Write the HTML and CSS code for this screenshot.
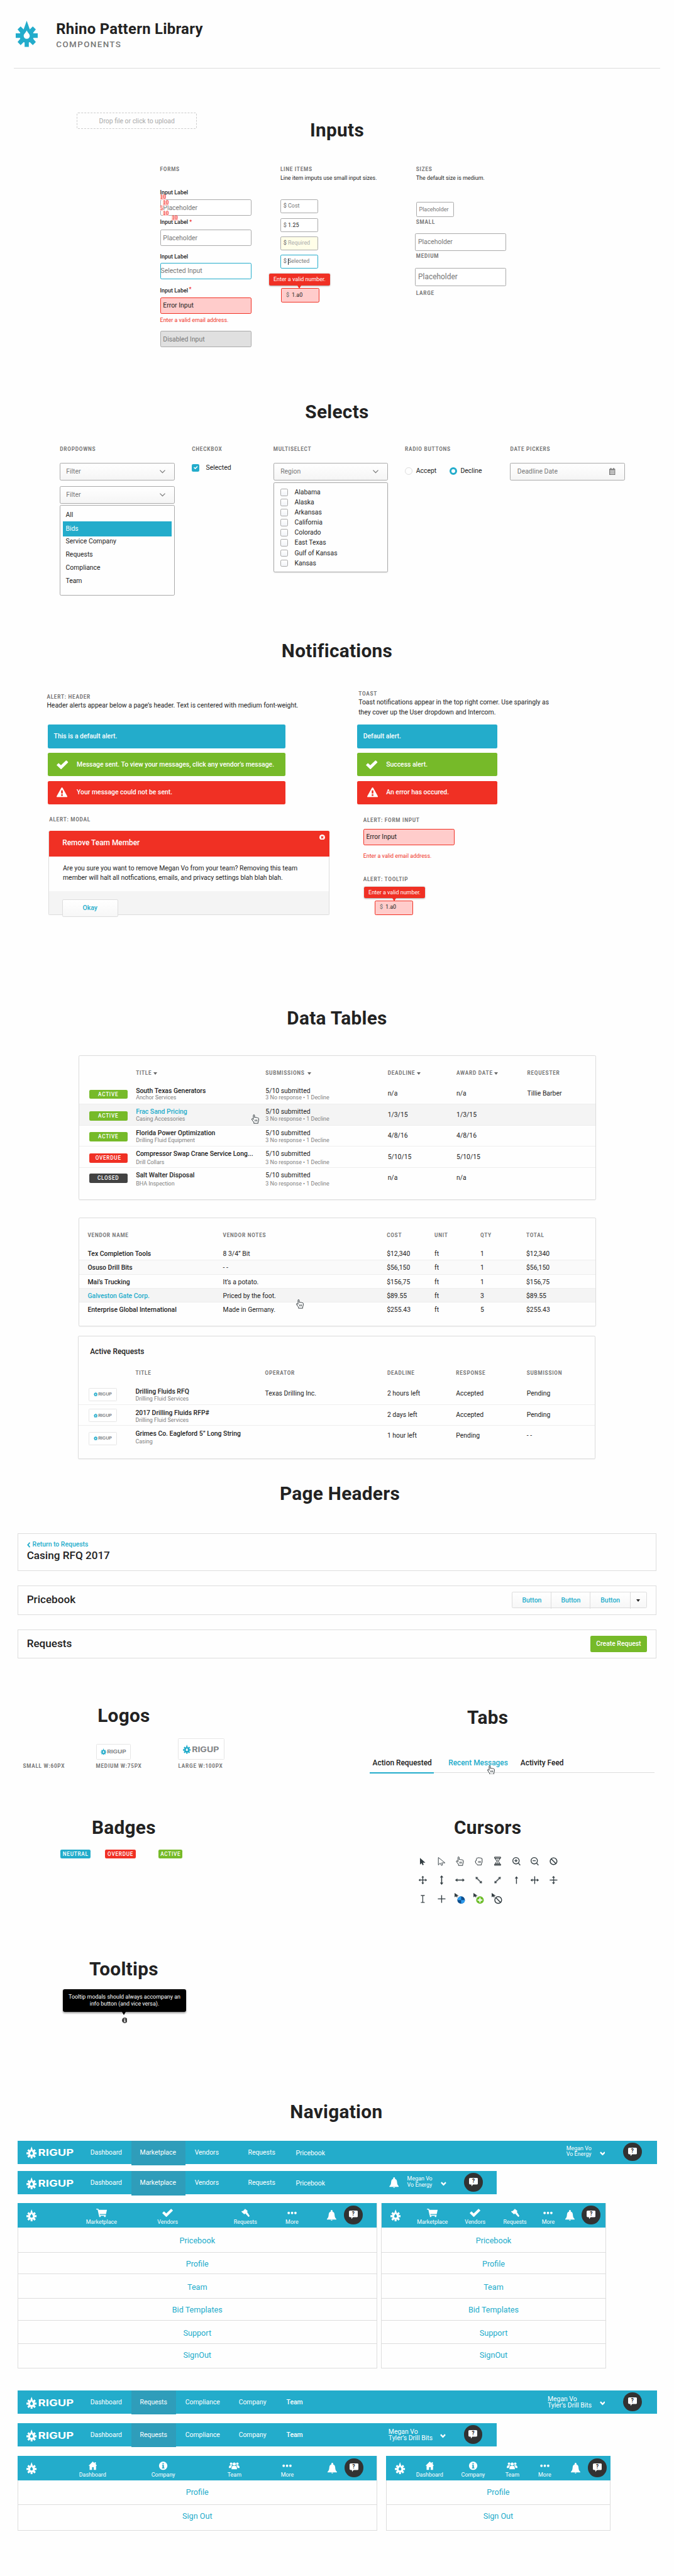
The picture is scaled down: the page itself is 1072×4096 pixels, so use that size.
FILE: index.html
```html
<!DOCTYPE html>
<html lang="en">
<head>
<meta charset="utf-8">
<title>Rhino Pattern Library</title>
<link rel="stylesheet" href="styles.css">
</head>
<body>
<svg class="sprite" aria-hidden="true">
  <symbol id="mark" viewBox="0 0 47 56">
    <g fill="currentColor">
      <path d="M23.5 0 32 24H15z"/>
      <circle cx="23.5" cy="32" r="15"/>
      <path d="M0 27h47v9.5H0zM19 40h9v16h-9z"/>
      <path d="M10.5 12 4 18.500l9 11 8-7zM36.500 12 43 18.500l-9 11-8-7zM10.500 52 4 45.500l9-11 8 7zM36.500 52 43 45.500l-9-11-8 7z"/>
    </g>
    <path class="hole" d="M23.500 20.500C25 25 30 28 30 32.200a6.500 6.500 0 0 1-13 0C17 28 22 25 23.500 20.500z"/>
  </symbol>
  <symbol id="check" viewBox="0 0 24 18"><path fill="currentColor" d="M0 9.500 3.500 6Q4 5.600 4.600 6L9 10 19.300.3q.6-.5 1.200 0L24 3.600 10 17.600q-.8.700-1.600 0z"/></symbol>
  <symbol id="warn" viewBox="0 0 22 20"><path fill="currentColor" fill-rule="evenodd" d="M9.600.8q1.400-1.600 2.800 0L21.800 18q.6 2-1.300 2H1.500q-1.900 0-1.300-2zM9.300 6v6.500h3.400V6zm0 8.200v3.200h3.400v-3.200z"/></symbol>
  <symbol id="down" viewBox="0 0 12 9"><path fill="none" stroke="currentColor" stroke-width="3" d="M1.200 1.500 6 6.500l4.800-5"/></symbol>
  <symbol id="thin" viewBox="0 0 12 8"><path fill="none" stroke="currentColor" stroke-width="1.600" d="M.6.800 6 6.400 11.400.8"/></symbol>
  <symbol id="bell" viewBox="0 0 20 23"><path fill="currentColor" d="M8.300 1.500h3.400v2C15 4.500 16 7 16.300 10c.3 4 .7 6.500 3.700 9v1.500H0V19c3-2.500 3.400-5 3.700-9C4 7 5 4.500 8.300 3.500zM8 21.200h4c-.3 2-3.700 2-4 0z"/><circle cx="10" cy="1.800" r="1.800" fill="currentColor"/></symbol>
  <symbol id="cart" viewBox="0 0 23 18"><path fill="currentColor" d="M0 0h4.500l.8 2.500H23L21 11.500H7.200l.5 1.700h13V15H6L3 1.800H0z"/><circle cx="8" cy="16.400" r="1.600" fill="currentColor"/><circle cx="18.500" cy="16.400" r="1.600" fill="currentColor"/></symbol>
  <symbol id="gavel" viewBox="0 0 18 18"><path fill="currentColor" d="m8.200.2 5.500 5-1.500 1.400 5.600 8.800-2.200 2.400L8.400 10l-2 2L0 6.300 1.700 4.700 3 5.300 7 1.500z"/></symbol>
  <symbol id="dots" viewBox="0 0 20 18"><g fill="currentColor"><circle cx="2.800" cy="9" r="2.600"/><circle cx="10" cy="9" r="2.600"/><circle cx="17.200" cy="9" r="2.600"/></g></symbol>
  <symbol id="home" viewBox="0 0 18 18"><path fill="currentColor" d="M9 0l4 3.800V1.500h2.500v4.700L18 9h-2v9h-5v-6H7.500v6H2.200V9H0z"/></symbol>
  <symbol id="info" viewBox="0 0 18 18"><circle cx="9" cy="9" r="9" fill="currentColor"/><path class="hole" d="M7.400 3.200h3v2.500h-3zM6.500 7h4v6h1.200v1.800H6.300V13h1.200V8.700h-1z"/></symbol>
  <symbol id="team" viewBox="0 0 26 18"><g fill="currentColor"><circle cx="5.500" cy="4" r="3"/><circle cx="20.500" cy="4" r="3"/><circle cx="13" cy="4.800" r="3.800"/><path d="M0 14.500q0-6.500 4-6.500h4.500Q5 10.500 5 14.500zM26 14.500q0-6.500-4-6.500h-4.500Q21 10.500 21 14.500zM6.300 17.500q0-8 4-8h5.400q4 0 4 8z"/></g></symbol>
  <symbol id="chat" viewBox="0 0 19 18"><path fill="#fff" d="M2.500 0h14Q19 0 19 2.500v9q0 2.500-2.500 2.500H8.500L5.500 18l-.5-4H2.500Q0 14 0 11.500v-9Q0 0 2.500 0z"/></symbol>
  <symbol id="cal" viewBox="0 0 13 15"><path fill="currentColor" d="M0 2h2.500V0h2v2h4V0h2v2H13v13H0z"/><path stroke="#fff" stroke-width=".9" d="M1 5.500h11M1 8.500h11M1 11.500h11M3.800 5v9M6.500 5v9M9.200 5v9"/></symbol>
  <symbol id="close" viewBox="0 0 12 12"><circle cx="6" cy="6" r="6" fill="#fff"/><path stroke="#f03024" stroke-width="2" d="m3.800 3.800 4.400 4.400m0-4.400L3.800 8.200"/></symbol>
  <symbol id="hand" viewBox="0 0 16 20"><path fill="#fff" stroke="#222b2f" stroke-width="1.200" stroke-linejoin="round" d="M5 19v-2.500L1 11.500q-1.300-2.500.8-2.500L4 11V2q0-1.300 1.200-1.300T6.500 2v4.500q2-.8 3 .3 2-.6 3 .6 2.500-.4 2.800 1.300V13L14 16.500V19z"/><path stroke="#222b2f" d="M7.500 11v4M9.700 11v4M11.900 11v4"/></symbol>
  <symbol id="grab" viewBox="0 0 16 20"><path fill="#fff" stroke="#222b2f" stroke-width="1.200" stroke-linejoin="round" d="M5 18v-1L1.500 14 .8 9.500 3 8.500V4.500Q4 2.500 6 3.300 7.500 1.500 9.500 3q2-.8 3 .6 2.600-.4 2.700 1.600v7L13.500 16v2z"/><path stroke="#222b2f" d="M7.500 9.500v4M9.700 9.500v4M11.900 9.500v4"/></symbol>
  <symbol id="arrow" viewBox="0 0 20 20"><path fill="#333e43" d="M4 3v14l3.500-3 2 4.500 2.500-1-2-4.500h5.500z"/></symbol>
  <symbol id="arrow-o" viewBox="0 0 20 20"><path fill="#fff" stroke="#333e43" stroke-width="1.200" d="M3 2v16l4-4 2.500 5L12 18l-2-4.500h7z"/></symbol>
  <symbol id="glass" viewBox="0 0 20 20"><path fill="#fff" stroke="#222b2f" stroke-width="1.300" d="M3.500 1.200h13v2.300h-13zM3.500 16.500h13v2.300h-13zM5 3.500q0 4 4 6.500-4 2.500-4 6.500h10q0-4-4-6.500 4-2.500 4-6.500z"/><path stroke="#222b2f" stroke-width="1.600" stroke-dasharray="1 1" d="M7.500 7h5M9 9h2M9.500 12h1M7.500 14h5M6.500 15.800h7"/></symbol>
  <symbol id="zoom-in" viewBox="0 0 20 20"><g fill="none" stroke="#333e43" stroke-width="1.700"><circle cx="9" cy="9" r="6.800"/><path d="m14 14 4 4.500M5.800 9h6.400M9 5.800v6.400"/></g></symbol>
  <symbol id="zoom-out" viewBox="0 0 20 20"><g fill="none" stroke="#333e43" stroke-width="1.700"><circle cx="9" cy="9" r="6.800"/><path d="m14 14 4 4.500M5.800 9h6.400"/></g></symbol>
  <symbol id="no" viewBox="0 0 20 20"><g fill="none" stroke="#333e43" stroke-width="1.900"><circle cx="10" cy="10" r="7.200"/><path d="m5 5 10 10"/></g></symbol>
  <symbol id="ns" viewBox="0 0 20 20"><path stroke="#333e43" stroke-width="2" d="M10 3v14"/><path fill="#333e43" d="m10 0 3.500 4.500h-7zM10 20l3.500-4.500h-7z"/></symbol>
  <symbol id="move" viewBox="0 0 20 20"><path stroke="#333e43" stroke-width="1.800" d="M10 3v14M3 10h14"/><path fill="#333e43" d="m10 1 2.800 3.500H7.200zM10 19l2.800-3.500H7.200zM1 10l3.500-2.800v5.600zM19 10l-3.500-2.800v5.600z"/></symbol>
  <symbol id="up" viewBox="0 0 20 20"><path stroke="#333e43" stroke-width="1.800" d="M10 4v14"/><path fill="#333e43" d="m10 2 3.500 4.500h-7z"/></symbol>
  <symbol id="col" viewBox="0 0 20 20"><path stroke="#333e43" stroke-width="1.800" d="M10 2v16M3 10h14"/><path fill="#333e43" d="M1 10l4-3v6zM19 10l-4-3v6z"/></symbol>
  <symbol id="beam" viewBox="0 0 20 20"><path fill="none" stroke="#333e43" stroke-width="1.600" d="M6 2.500h3l1 1 1-1h3M6 17.500h3l1-1 1 1h3M10 3.500v13"/></symbol>
  <symbol id="plus" viewBox="0 0 20 20"><path stroke="#333e43" stroke-width="1.800" d="M10 2v16M2 10h16"/></symbol>
  <symbol id="tip" viewBox="0 0 12 10"><path fill="#333e43" d="M0 0v9l3-2 2 2.500 1.500-1L5 6h4z"/></symbol>
</svg>

<main class="page">
  <header class="masthead">
    <svg class="masthead-mark"><use href="#mark"/></svg>
    <div>
      <h1>Rhino Pattern Library</h1>
      <p class="masthead-sub">COMPONENTS</p>
    </div>
  </header>

  <section class="inputs">
    <div class="inputs-top">
      <div class="dropzone">Drop file or click to upload</div>
      <h2>Inputs</h2>
    </div>
    <div class="inputs-cols">
      <div class="col forms">
        <div class="cap">FORMS</div>
        <div class="label mt34">Input Label</div>
        <div class="input mt5">Placeholder</div>
        <div class="label mt7">Input Label <b class="req">*</b></div>
        <div class="input mt6">Placeholder</div>
        <div class="label mt17">Input Label</div>
        <div class="input selected flush mt3">Selected Input</div>
        <div class="label mt18">Input Label<b class="req sup">*</b></div>
        <div class="input error mt6">Error Input</div>
        <div class="error-text mt6">Enter a valid email address.</div>
        <div class="input disabled mt14">Disabled Input</div>
        <span class="spec s1">10</span><span class="spec s2">10</span><span class="spec s3">5</span><span class="spec s4">10</span><span class="spec s5">10</span>
      </div>
      <div class="col lines">
        <div class="cap">LINE ITEMS</div>
        <div class="note mt3">Line item imputs use small input sizes.</div>
        <div class="input money mt36"><b>$</b>Cost</div>
        <div class="input money dark low mt10"><b>$</b>1.25</div>
        <div class="input money required mt9"><b>$</b>Required</div>
        <div class="input money selected mt9"><b>$</b><i class="caret"></i>Selected</div>
        <div class="bubble mt11">Enter a valid number.</div>
        <div class="input money error wide mt6"><b>$</b>1.a0</div>
      </div>
      <div class="col">
        <div class="cap">SIZES</div>
        <div class="note mt3">The default size is medium.</div>
        <div class="input small mt41">Placeholder</div>
        <div class="cap mt4">SMALL</div>
        <div class="input medium mt16">Placeholder</div>
        <div class="cap mt4">MEDIUM</div>
        <div class="input large mt16">Placeholder</div>
        <div class="cap mt7">LARGE</div>
      </div>
    </div>
  </section>

  <section class="selects">
    <h2>Selects</h2>
    <div class="selects-cols">
      <div>
        <div class="cap">DROPDOWNS</div>
        <div class="select">Filter<svg><use href="#thin"/></svg></div>
        <div class="select second">Filter<svg><use href="#thin"/></svg></div>
        <ul class="menu"><li>All</li><li class="on">Bids</li><li>Service Company</li><li>Requests</li><li>Compliance</li><li>Team</li></ul>
      </div>
      <div>
        <div class="cap">CHECKBOX</div>
        <div class="checked"><span class="box on"><svg><use href="#check"/></svg></span>Selected</div>
      </div>
      <div>
        <div class="cap">MULTISELECT</div>
        <div class="select pad">Region<svg><use href="#thin"/></svg></div>
        <ul class="multi">
          <li><span class="box"></span>Alabama</li><li><span class="box"></span>Alaska</li><li><span class="box"></span>Arkansas</li><li><span class="box"></span>California</li><li><span class="box"></span>Colorado</li><li><span class="box"></span>East Texas</li><li><span class="box"></span>Gulf of Kansas</li><li><span class="box"></span>Kansas</li>
        </ul>
      </div>
      <div>
        <div class="cap">RADIO BUTTONS</div>
        <div class="radios"><span class="radio"></span><span class="opt">Accept</span><span class="radio on"></span><span>Decline</span></div>
      </div>
      <div>
        <div class="cap">DATE PICKERS</div>
        <div class="select pad date">Deadline Date<svg class="cal"><use href="#cal"/></svg></div>
      </div>
    </div>
  </section>

  <section class="notes">
    <h2>Notifications</h2>
    <div class="notes-cols">
      <div class="notes-left">
        <div class="intro">
          <div class="cap">ALERT: HEADER</div>
          <p>Header alerts appear below a page’s header. Text is centered with medium font-weight.</p>
        </div>
        <div class="alert">This is a default alert.</div>
        <div class="alert good"><svg><use href="#check"/></svg>Message sent. To view your messages, click any vendor’s message.</div>
        <div class="alert bad"><svg><use href="#warn"/></svg>Your message could not be sent.</div>
        <div class="cap modal-cap">ALERT: MODAL</div>
        <div class="modal">
          <div class="modal-head">Remove Team Member<svg><use href="#close"/></svg></div>
          <div class="modal-body">Are you sure you want to remove Megan Vo from your team? Removing this team<br>member will halt all notfications, emails, and privacy settings blah blah blah.</div>
          <div class="modal-foot"><span class="btn">Okay</span></div>
        </div>
      </div>
      <div class="notes-right">
        <div class="intro">
          <div class="cap">TOAST</div>
          <p>Toast notifications appear in the top right corner. Use sparingly as<br>they cover up the User dropdown and Intercom.</p>
        </div>
        <div class="alert">Default alert.</div>
        <div class="alert good"><svg><use href="#check"/></svg>Success alert.</div>
        <div class="alert bad"><svg><use href="#warn"/></svg>An error has occured.</div>
        <div class="samples">
          <div class="cap">ALERT: FORM INPUT</div>
          <div class="input error mt9">Error Input</div>
          <div class="error-text mt16">Enter a valid email address.</div>
          <div class="cap mt35">ALERT: TOOLTIP</div>
          <div class="bubble mt6">Enter a valid number.</div>
          <div class="input money error wide mt5"><b>$</b>1.a0</div>
        </div>
      </div>
    </div>
  </section>

  <section class="tables">
    <h2>Data Tables</h2>
    <div class="card t1">
      <div class="row head"><span></span><span class="sort">TITLE</span><span class="sort far">SUBMISSIONS</span><span class="sort">DEADLINE</span><span class="sort">AWARD DATE</span><span>REQUESTER</span></div>
      <div class="row d0"><span class="badge">ACTIVE</span><div><b>South Texas Generators</b><small>Anchor Services</small></div><div>5/10 submitted<small>3 No response • 1 Decline</small></div><span>n/a</span><span>n/a</span><span>Tillie Barber</span></div>
      <div class="row d1 hover"><span class="badge">ACTIVE</span><div><b>Frac Sand Pricing</b><small>Casing Accessories</small></div><div>5/10 submitted<small>3 No response • 1 Decline</small></div><span>1/3/15</span><span>1/3/15</span><span></span></div>
      <div class="row d2"><span class="badge">ACTIVE</span><div><b>Florida Power Optimization</b><small>Drilling Fluid Equipment</small></div><div>5/10 submitted<small>3 No response • 1 Decline</small></div><span>4/8/16</span><span>4/8/16</span><span></span></div>
      <div class="row d3"><span class="badge red">OVERDUE</span><div><b>Compressor Swap Crane Service Long...</b><small>Drill Collars</small></div><div>5/10 submitted<small>3 No response • 1 Decline</small></div><span>5/10/15</span><span>5/10/15</span><span></span></div>
      <div class="row d4 last"><span class="badge dark">CLOSED</span><div><b>Salt Walter Disposal</b><small>BHA Inspection</small></div><div>5/10 submitted<small>3 No response • 1 Decline</small></div><span>n/a</span><span>n/a</span><span></span></div>
      <svg class="pointer p1"><use href="#hand"/></svg>
    </div>
    <div class="card t2">
      <div class="row head"><span>VENDOR NAME</span><span>VENDOR NOTES</span><span>COST</span><span>UNIT</span><span>QTY</span><span>TOTAL</span></div>
      <div class="row"><b>Tex Completion Tools</b><span>8 3/4” Bit</span><span>$12,340</span><span>ft</span><span>1</span><span>$12,340</span></div>
      <div class="row alt"><b>Osuso Drill Bits</b><span>- -</span><span>$56,150</span><span>ft</span><span>1</span><span>$56,150</span></div>
      <div class="row"><b>Mai’s Trucking</b><span>It’s a potato.</span><span>$156,75</span><span>ft</span><span>1</span><span>$156,75</span></div>
      <div class="row hover"><b>Galveston Gate Corp.</b><span>Priced by the foot.</span><span>$89.55</span><span>ft</span><span>3</span><span>$89.55</span></div>
      <div class="row last"><b>Enterprise Global International</b><span>Made in Germany.</span><span>$255.43</span><span>ft</span><span>5</span><span>$255.43</span></div>
      <svg class="pointer p2"><use href="#hand"/></svg>
    </div>
    <div class="card t3">
      <div class="card-title">Active Requests</div>
      <div class="row head"><span></span><span>TITLE</span><span>OPERATOR</span><span>DEADLINE</span><span>RESPONSE</span><span>SUBMISSION</span></div>
      <div class="row"><span class="logo-box sm"><svg viewBox="0 0 101 26"><use href="#mark" width="22" height="26"/><text class="word" x="25" y="20.800" textLength="76" lengthAdjust="spacingAndGlyphs">RIGUP</text></svg></span><div><b>Drilling Fluids RFQ</b><small>Drilling Fluid Services</small></div><span>Texas Drilling Inc.</span><span>2 hours left</span><span>Accepted</span><span>Pending</span></div>
      <div class="row d1"><span class="logo-box sm"><svg viewBox="0 0 101 26"><use href="#mark" width="22" height="26"/><text class="word" x="25" y="20.800" textLength="76" lengthAdjust="spacingAndGlyphs">RIGUP</text></svg></span><div><b>2017 Drilling Fluids RFP#</b><small>Drilling Fluid Services</small></div><span></span><span>2 days left</span><span>Accepted</span><span>Pending</span></div>
      <div class="row d2 last"><span class="logo-box sm low"><svg viewBox="0 0 101 26"><use href="#mark" width="22" height="26"/><text class="word" x="25" y="20.800" textLength="76" lengthAdjust="spacingAndGlyphs">RIGUP</text></svg></span><div><b>Grimes Co. Eagleford 5” Long String</b><small>Casing</small></div><span></span><span>1 hour left</span><span>Pending</span><span>- -</span></div>
    </div>
  </section>

  <section class="headers">
    <h2>Page Headers</h2>
    <div class="page-header tall"><div><a class="back"><svg viewBox="0 0 7 12"><path fill="none" stroke="currentColor" stroke-width="2.500" d="M6 1 1.800 6 6 11"/></svg>Return to Requests</a><h3>Casing RFQ 2017</h3></div></div>
    <div class="page-header"><h3>Pricebook</h3><div class="btn-group"><span>Button</span><span>Button</span><span>Button</span><span class="more"></span></div></div>
    <div class="page-header"><h3>Requests</h3><span class="create">Create Request</span></div>
  </section>

  <section class="duo">
    <div class="duo-left">
      <h2>Logos</h2>
      <div class="logos">
        <div><div class="cap">SMALL W:60PX</div></div>
        <div><span class="logo-box md"><svg viewBox="0 0 101 26"><use href="#mark" width="22" height="26"/><text class="word" x="25" y="20.800" textLength="76" lengthAdjust="spacingAndGlyphs">RIGUP</text></svg></span><div class="cap">MEDIUM W:75PX</div></div>
        <div><span class="logo-box lg"><svg viewBox="0 0 101 26"><use href="#mark" width="22" height="26"/><text class="word" x="25" y="20.800" textLength="76" lengthAdjust="spacingAndGlyphs">RIGUP</text></svg></span><div class="cap">LARGE W:100PX</div></div>
      </div>
      <h2 class="badges-title">Badges</h2>
      <div class="badges"><span class="badge blue">NEUTRAL</span><span class="badge red">OVERDUE</span><span class="badge">ACTIVE</span></div>
      <h2 class="tooltips-title">Tooltips</h2>
      <div class="tooltip">Tooltip modals should always accompany an<br>info button (and vice versa).</div>
      <svg class="tooltip-info"><use href="#info"/></svg>
    </div>
    <div class="duo-right">
      <h2>Tabs</h2>
      <div class="tabs"><span class="tab on">Action Requested</span><span class="tab link">Recent Messages<svg class="pointer p3"><use href="#hand"/></svg></span><span class="tab">Activity Feed</span></div>
      <h2 class="cursors-title">Cursors</h2>
      <div class="cursors">
        <svg><use href="#arrow"/></svg><svg><use href="#arrow-o"/></svg><svg><use href="#hand"/></svg><svg><use href="#grab"/></svg><svg><use href="#glass"/></svg><svg><use href="#zoom-in"/></svg><svg><use href="#zoom-out"/></svg><svg><use href="#no"/></svg>
        <svg><use href="#move"/></svg><svg><use href="#ns"/></svg><svg class="turn90"><use href="#ns"/></svg><svg class="turn315"><use href="#ns"/></svg><svg class="turn45"><use href="#ns"/></svg><svg><use href="#up"/></svg><svg><use href="#col"/></svg><svg class="turn90"><use href="#col"/></svg>
        <svg><use href="#beam"/></svg><svg><use href="#plus"/></svg>
        <svg class="combo" viewBox="0 0 24 26"><use href="#tip" width="12" height="10"/><circle cx="14" cy="15" r="8" fill="#0d4f8f"/><path fill="#2f9df0" d="M14 15V7a8 8 0 0 0-8 8zM14 15v8a8 8 0 0 0 8-8z"/></svg>
        <svg class="combo" viewBox="0 0 24 26"><use href="#tip" width="12" height="10"/><circle cx="14" cy="15" r="8" fill="#6cbf28"/><path stroke="#fff" stroke-width="2.600" d="M14 10v10M9 15h10"/></svg>
        <svg class="combo" viewBox="0 0 24 26"><use href="#tip" width="12" height="10"/><g fill="none" stroke="#333e43" stroke-width="1.900"><circle cx="14" cy="15" r="7.200"/><path d="m9 10 10 10"/></g></svg>
      </div>
    </div>
  </section>

  <section class="nav">
    <h2>Navigation</h2>
    <div class="bar b1"><svg class="brand" viewBox="0 0 101 26"><use href="#mark" width="22" height="26"/><text class="word" x="25" y="20.800" textLength="76" lengthAdjust="spacingAndGlyphs">RIGUP</text></svg><span>Dashboard</span><span class="on">Marketplace</span><span class="in">Vendors</span><span>Requests</span><span class="low">Pricebook</span><div class="user">Megan Vo<br>Vo Energy</div><svg class="down"><use href="#down"/></svg><span class="chat"><svg><use href="#chat"/></svg><i>?</i></span></div>
    <div class="bar b2"><svg class="brand" viewBox="0 0 101 26"><use href="#mark" width="22" height="26"/><text class="word" x="25" y="20.800" textLength="76" lengthAdjust="spacingAndGlyphs">RIGUP</text></svg><span>Dashboard</span><span class="on">Marketplace</span><span class="in">Vendors</span><span>Requests</span><span class="low">Pricebook</span><svg class="bell"><use href="#bell"/></svg><div class="user">Megan Vo<br>Vo Energy</div><svg class="down"><use href="#down"/></svg><span class="chat"><svg><use href="#chat"/></svg><i>?</i></span></div>
    <div class="drawers">
      <div class="drawer six">
        <div class="icons i1"><svg class="mark"><use href="#mark"/></svg><span><svg><use href="#cart"/></svg>Marketplace</span><span><svg><use href="#check"/></svg>Vendors</span><span><svg><use href="#gavel"/></svg>Requests</span><span><svg><use href="#dots"/></svg>More</span><svg class="bell"><use href="#bell"/></svg><span class="chat"><svg><use href="#chat"/></svg><i>?</i></span></div>
        <a>Pricebook</a><a>Profile</a><a>Team</a><a>Bid Templates</a><a>Support</a><a>SignOut</a>
      </div>
      <div class="drawer six narrow">
        <div class="icons i2"><svg class="mark"><use href="#mark"/></svg><span><svg><use href="#cart"/></svg>Marketplace</span><span><svg><use href="#check"/></svg>Vendors</span><span><svg><use href="#gavel"/></svg>Requests</span><span><svg><use href="#dots"/></svg>More</span><svg class="bell"><use href="#bell"/></svg><span class="chat"><svg><use href="#chat"/></svg><i>?</i></span></div>
        <a>Pricebook</a><a>Profile</a><a>Team</a><a>Bid Templates</a><a>Support</a><a>SignOut</a>
      </div>
    </div>
    <div class="bar b3"><svg class="brand" viewBox="0 0 101 26"><use href="#mark" width="22" height="26"/><text class="word" x="25" y="20.800" textLength="76" lengthAdjust="spacingAndGlyphs">RIGUP</text></svg><span>Dashboard</span><span class="on">Requests</span><span class="in">Compliance</span><span>Company</span><span class="strong">Team</span><div class="user">Megan Vo<br>Tyler’s Drill Bits</div><svg class="down"><use href="#down"/></svg><span class="chat"><svg><use href="#chat"/></svg><i>?</i></span></div>
    <div class="bar b4"><svg class="brand" viewBox="0 0 101 26"><use href="#mark" width="22" height="26"/><text class="word" x="25" y="20.800" textLength="76" lengthAdjust="spacingAndGlyphs">RIGUP</text></svg><span>Dashboard</span><span class="on">Requests</span><span class="in">Compliance</span><span>Company</span><span class="strong">Team</span><div class="user">Megan Vo<br>Tyler’s Drill Bits</div><svg class="down"><use href="#down"/></svg><span class="chat"><svg><use href="#chat"/></svg><i>?</i></span></div>
    <div class="drawers second">
      <div class="drawer two">
        <div class="icons i3"><svg class="mark"><use href="#mark"/></svg><span><svg><use href="#home"/></svg>Dashboard</span><span><svg><use href="#info"/></svg>Company</span><span><svg><use href="#team"/></svg>Team</span><span><svg><use href="#dots"/></svg>More</span><svg class="bell"><use href="#bell"/></svg><span class="chat"><svg><use href="#chat"/></svg><i>?</i></span></div>
        <a>Profile</a><a>Sign Out</a>
      </div>
      <div class="drawer two narrow">
        <div class="icons i4"><svg class="mark"><use href="#mark"/></svg><span><svg><use href="#home"/></svg>Dashboard</span><span><svg><use href="#info"/></svg>Company</span><span><svg><use href="#team"/></svg>Team</span><span><svg><use href="#dots"/></svg>More</span><svg class="bell"><use href="#bell"/></svg><span class="chat"><svg><use href="#chat"/></svg><i>?</i></span></div>
        <a>Profile</a><a>Sign Out</a>
      </div>
    </div>
  </section>
</main>
</body>
</html>
```
FILE: styles.css
```css
:root {
  --blue: #23accb;
  --green: #76ba29;
  --red: #f03024;
  --ink: #222;
  --gray: #777;
  --line: #ddd;
  --hole: #fff;
}
* { box-sizing: border-box; }
body { margin: 0; background: #fefefe; }
.sprite { position: absolute; width: 0; height: 0; }
.hole { fill: var(--hole); }
.word { font: 700 19.500px Inter, sans-serif; fill: var(--word, #828487); }

.page {
  zoom: 0.744444;
  width: 1440px;
  height: 5502px;
  overflow: hidden;
  background: #fefefe;
  color: var(--ink);
  font: 400 14px/16px Roboto, sans-serif;
  white-space: nowrap;
}
h1, h2, h3, p, ul { margin: 0; padding: 0; list-style: none; }
h2 { font-size: 40px; line-height: 40px; font-weight: 700; letter-spacing: .4px; text-align: center; }
h3 { font-size: 23px; line-height: 24px; font-weight: 500; }
b { font-weight: 500; }
svg { display: block; flex: none; }
.cap { height: 16px; font-size: 11px; font-weight: 700; letter-spacing: 1px; color: var(--gray); }
.note, .error-text { height: 16px; font-size: 12px; }
.error-text { color: var(--red); }

.mt3 { margin-top: 3px; } .mt4 { margin-top: 4px; } .mt5 { margin-top: 5px; }
.mt6 { margin-top: 6px; } .mt7 { margin-top: 7px; } .mt9 { margin-top: 9px; }
.mt10 { margin-top: 10px; } .mt11 { margin-top: 11px; } .mt14 { margin-top: 14px; }
.mt16 { margin-top: 16px; } .mt17 { margin-top: 17px; } .mt18 { margin-top: 18px; }
.mt34 { margin-top: 34px; } .mt35 { margin-top: 35px; } .mt36 { margin-top: 36px; }
.mt41 { margin-top: 41px; }

/* Masthead */
.masthead { display: flex; height: 146px; margin: 0 30px; padding: 45px 0 0 4px; border-bottom: 1px solid var(--line); }
.masthead-mark { width: 47px; height: 56px; margin-right: 39px; color: var(--blue); }
h1 { margin-top: 2px; font-size: 32px; line-height: 32px; font-weight: 700; letter-spacing: .4px; }
.masthead-sub { margin-top: 7px; font-size: 18px; line-height: 20px; font-weight: 500; letter-spacing: 1.900px; color: var(--gray); }

/* Inputs */
.inputs { height: 714px; padding-top: 95px; }
.inputs-top { display: grid; grid-template-columns: 1fr auto 1fr; height: 114px; }
.inputs-top h2 { margin-top: 17px; }
.dropzone { width: 257px; height: 34px; margin-left: 164px; border: 1px dashed #ccc; border-radius: 3px; line-height: 34px; text-align: center; color: #aaa; }
.inputs-cols { display: grid; grid-template-columns: 257px 290px 1fr; padding-left: 342px; }
.col { position: relative; }
.label { height: 16px; font-size: 12px; font-weight: 500; }
.req { color: var(--red); }
.req.sup { position: relative; left: 2px; top: -3px; }
.input { display: flex; align-items: center; width: 195px; height: 35px; padding: 2px 0 0 5px; border: 1px solid #aaa; border-radius: 3px; background: #fff; color: var(--gray); }
.input.selected { border-color: var(--blue); }
.input.flush { padding-left: 0; }
.input.error { border-color: var(--red); background: #ffcccb; color: var(--ink); padding-top: 0; }
.input.disabled { background: #e0e0e0; }
.input.small { width: 81px; height: 32px; font-size: 12px; }
.input.medium { height: 37px; padding-top: 0; margin-left: -2px; }
.input.large { height: 40px; font-size: 16px; padding-top: 0; margin-left: -2px; }
.input.money { width: 81px; height: 30px; padding: 0 0 0 5px; font-size: 12px; }
.input.money b { width: 10px; color: var(--gray); }
.input.money.dark { color: var(--ink); }
.input.money.low { padding-top: 2px; }
.input.required { background: #fffee8; color: #aaa; }
.input.money.wide { margin-left: 2px; padding-left: 9px; }
.input.money.wide b { width: 12px; }
.caret { width: 1px; height: 14px; margin-right: -1px; background: var(--ink); }
.bubble { position: relative; z-index: 1; width: 130px; height: 25px; margin-left: -24px; border-radius: 3px; background: var(--red); box-shadow: 0 1px 3px rgba(0,0,0,.35); color: #fff; font-size: 12px; line-height: 25px; text-align: center; }
.bubble::after { content: ""; position: absolute; left: 60px; top: 25px; border: 5px solid transparent; border-top: 8px solid var(--red); border-bottom: 0; }
.spec { position: absolute; height: 10px; background: #fcc; color: var(--red); font: 12.500px/10px "Liberation Serif", serif; }
.s1 { left: 0; top: 62px; } .s2 { left: 6px; top: 74px; } .s3 { left: 0; top: 85px; }
.s4 { left: 6px; top: 96px; } .s5 { left: 25px; top: 106px; }

/* Selects */
.selects { height: 510px; }
.selects-cols { display: grid; grid-template-columns: 282px 174px 281px 225px 246px; padding: 53px 0 0 128px; }
.select { display: flex; justify-content: space-between; align-items: center; width: 245px; height: 37px; margin-top: 20px; padding: 0 19px 0 12px; border: 1px solid #aaa; border-radius: 3px; background: linear-gradient(#fff, #f5f5f5); color: var(--gray); }
.select svg { width: 12px; height: 8px; }
.select svg.cal { width: 13px; height: 15px; }
.select.second { margin-top: 13px; }
.select.pad { padding-left: 14px; }
.menu { width: 245px; height: 193px; margin-top: 3px; padding: 7px 5px; border: 1px solid #aaa; border-radius: 3px; }
.menu li { height: 28px; padding-left: 6px; line-height: 28px; }
.menu .on { height: 33px; margin: -2px 0 -3px; line-height: 33px; background: var(--blue); color: #fff; }
.multi { width: 245px; height: 193px; margin-top: 4px; padding: 10px 14px; border: 1px solid #aaa; border-radius: 3px; box-shadow: 0 1px 3px rgba(0,0,0,.1); }
.multi li { display: flex; align-items: center; height: 21.570px; }
.box { width: 16px; height: 16px; margin-right: 14px; border: 1px solid #aaa; border-radius: 3px; background: linear-gradient(#fff, #f2f4f8); }
.box.on { display: flex; align-items: center; justify-content: center; border: 0; background: var(--blue); color: #fff; }
.box.on svg { width: 9px; height: 7px; }
.checked { display: flex; align-items: center; margin-top: 22px; }
.radios { display: flex; align-items: center; margin-top: 29px; }
.radio { width: 16px; height: 16px; margin-right: 8px; border: 2px solid #ddd; border-radius: 50%; }
.radio.on { border: 5px solid var(--blue); }
.opt { width: 71px; }

/* Notifications */
.notes { height: 785px; }
.notes-cols { display: grid; grid-template-columns: 663px 1fr; padding-left: 100px; }
.intro { height: 138px; padding-top: 71px; }
.intro p { margin-top: -1px; line-height: 21px; }
.notes-right .intro { padding-top: 65px; margin-left: 3px; }
.alert { display: flex; align-items: center; width: 508px; height: 50px; margin: 0 0 10px 2px; padding-left: 13px; border-radius: 3px; background: var(--blue); color: #fff; font-weight: 500; }
.alert.good { background: var(--green); }
.alert.bad { background: var(--red); }
.alert.good, .alert.bad { padding-left: 19px; }
.alert svg { width: 25px; height: 19px; margin-right: 18px; }
.alert.bad svg { width: 23px; height: 21px; margin-right: 20px; }
.notes-right .alert { width: 299px; margin-left: 0; }
.notes-right .alert.bad { padding-left: 22px; }
.notes-right .alert.bad svg { margin-right: 17px; }
.modal-cap { margin: 25px 0 15px 5px; }
.modal { width: 600px; height: 180px; margin-left: 4px; border: 1px solid var(--line); border-top: 0; border-radius: 3px; }
.modal-head { display: flex; justify-content: space-between; height: 55px; margin: 0 -1px; padding: 20px 9px 0 29px; border-radius: 3px 3px 0 0; background: var(--red); color: #fff; font-size: 16px; font-weight: 500; }
.modal-head svg { width: 12px; height: 12px; margin-top: -12px; }
.modal-body { height: 74px; padding: 15px 0 0 29px; line-height: 21px; }
.modal-foot { height: 50px; padding: 18px 0 0 27px; background: #f4f4f4; }
.btn { display: block; width: 120px; height: 37px; border: 1px solid var(--line); border-radius: 3px; background: linear-gradient(#fff, #f7f7f7); color: var(--blue); font-weight: 500; line-height: 35px; text-align: center; }
.samples { padding: 17px 0 0 13px; }
.samples .bubble { margin-left: 2px; }
.samples .input.money { margin-left: 25px; }

/* Data tables */
.tables { height: 1015px; }
.tables h2 { margin-bottom: 59px; }
.card { position: relative; width: 1105px; margin-left: 168px; border: 1px solid var(--line); border-radius: 3px; box-shadow: 0 1px 2px rgba(0,0,0,.05); background: #fefefe; }
.row { display: grid; align-items: start; height: 45px; border-bottom: 2px solid #eee; }
.row.last { border-bottom: 0; }
.row.head { border: 0; font-size: 11px; font-weight: 700; letter-spacing: 1px; color: var(--gray); }
.row > * { padding-top: 14px; }
.row > div { padding-top: 8px; }
.row small { display: block; height: 14px; font-size: 12px; line-height: 14px; color: #808080; }
.row b { display: block; }
.row.hover { background: #f4f4f4; }
.row.hover b { color: var(--blue); }
.row.alt { background: #fafafa; }
.sort::after { content: ""; display: inline-block; margin-left: 3px; border: 5px solid transparent; border-top: 6px solid #666; border-bottom: 0; }
.sort.far::after { margin-left: 6px; }
.t1 { height: 309px; margin-bottom: 38px; }
.t1 .row, .t3 .row { grid-template-columns: 100px 277px 261px 147px 151px 1fr; padding-left: 21px; }
.t1 .head { height: 59px; padding-top: 15px; }
.d0 small { margin-top: -1px; }
.d2 small { margin-top: 1px; }
.d3 small { margin-top: 2px; }
.d4 small { margin-top: 3px; }
.badge { width: 82px; height: 20px; padding: 0; border-radius: 3px; background: var(--green); color: #fff; font-size: 11px; font-weight: 500; letter-spacing: 1px; line-height: 20px; text-align: center; }
.row .badge { margin-top: 14px; padding: 0; }
.row.d0 .badge, .row.d4 .badge { margin-top: 13px; }
.badge.red { background: var(--red); }
.badge.dark { background: #424242; }
.badge.blue { background: var(--blue); }
.pointer { position: absolute; width: 16px; height: 20px; padding: 0; }
.p1 { left: 368px; top: 125px; }
.t2 { height: 232px; margin-bottom: 20px; }
.t2 .row { grid-template-columns: 289px 350px 102px 98px 98px 1fr; height: 30px; padding-left: 18px; }
.t2 .row > * { padding-top: 8px; }
.t2 .head { height: 60px; padding-top: 21px; }
.t2 .pointer { padding: 0; }
.p2 { left: 463px; top: 173px; }
.t3 { height: 264px; margin-left: 167px; }
.card-title { padding: 26px 0 0 24px; font-size: 16px; font-weight: 500; }
.t3 .head { height: 59px; padding-top: 15px; }
.t3 .row > div { padding-top: 10px; }
.logo-box { display: flex; align-items: center; justify-content: center; border: 1px solid #e6e6e6; border-radius: 2px; color: var(--blue); background: #fff; }
.logo-box.sm { width: 60px; height: 28px; margin-top: 9px; padding: 0; }
.logo-box.sm.low { margin-top: 13px; }
.logo-box.sm svg { width: 39px; height: 10px; }
.logo-box.md { width: 75px; height: 34px; }
.logo-box.md svg { width: 55px; height: 14px; }
.logo-box.lg { width: 100px; height: 46px; }
.logo-box.lg svg { width: 77px; height: 20px; }

/* Page headers */
.headers { height: 475px; }
.headers h2 { padding-left: 12px; margin-bottom: 65px; }
.page-header { display: flex; justify-content: space-between; align-items: center; width: 1365px; height: 63px; margin: 0 0 31px 37px; padding: 0 19px; border: 1px solid var(--line); }
.page-header.tall { height: 80px; }
.back { display: flex; align-items: center; margin: -3px 0 4px; color: var(--blue); font-weight: 500; }
.back svg { width: 7px; height: 12px; margin-right: 5px; }
.btn-group { display: grid; grid-template-columns: 82px 83px 86px 34px; height: 35px; border: 1px solid var(--line); border-radius: 3px; background: linear-gradient(#fff, #f7f7f7); color: var(--blue); font-weight: 500; line-height: 35px; text-align: center; }
.btn-group span + span { border-left: 1px solid var(--line); }
.more::after { content: ""; display: inline-block; vertical-align: 2px; border: 4.500px solid transparent; border-top: 6px solid #222; border-bottom: 0; }
.create { width: 120px; height: 35px; border-radius: 3px; background: var(--green); color: #fff; font-weight: 500; line-height: 35px; text-align: center; }

/* Logos, badges, tooltips, tabs, cursors */
.duo { display: grid; grid-template-columns: 529px 1fr; height: 845px; }
.logos { display: grid; grid-template-columns: 156px 176px 1fr; align-items: end; height: 96px; padding-left: 49px; }
.logos .cap { margin-top: 6px; }
.logos .logo-box.lg { margin-left: -1px; }
.badges-title { margin-top: 102px; }
.badges { display: flex; height: 19px; margin: 27px 0 0 129px; }
.badges .badge { width: 65px; height: 19px; line-height: 19px; }
.badges .badge:nth-child(2) { margin: 0 49px 0 31px; }
.badges .badge:nth-child(3) { width: 51px; }
.tooltips-title { margin-top: 217px; }
.tooltip { position: relative; width: 264px; height: 48px; margin: 23px 0 0 134px; padding-top: 9px; border-radius: 4px; background: #000; box-shadow: 0 2px 4px rgba(0,0,0,.4); color: #fff; font-size: 12px; line-height: 15px; text-align: center; }
.tooltip::after { content: ""; position: absolute; left: 127px; top: 48px; border: 5px solid transparent; border-top: 8px solid #000; border-bottom: 0; }
.tooltip-info { width: 12px; height: 12px; margin: 12px 0 0 260px; color: #424242; }
.duo-right h2 { width: 500px; margin: 3px 0 0 263px; }
.tabs { display: grid; grid-template-columns: 137px 185px 1fr; width: 609px; height: 42px; margin: 57px 0 0 261px; border-bottom: 1px solid var(--line); }
.tab { position: relative; padding-top: 14px; font-size: 16px; font-weight: 500; }
.tab.on { padding-left: 6px; height: 43px; border-bottom: 3px solid var(--blue); }
.tab.link { color: var(--blue); padding-left: 31px; }
.p3 { left: 114px; top: 25px; }
.duo-right .cursors-title { margin-top: 96px; }
.cursors { display: grid; grid-template-columns: repeat(8, 40px); grid-auto-rows: 40px; place-items: center; margin: 33px 0 0 354px; }
.cursors svg { width: 20px; height: 20px; overflow: visible; filter: drop-shadow(0 1px 1px rgba(0,0,0,.2)); }
.cursors svg.combo { width: 24px; height: 26px; }
.turn90 { transform: rotate(90deg); }
.turn45 { transform: rotate(45deg) scale(.95); }
.turn315 { transform: rotate(-45deg) scale(.95); }

/* Navigation */
.nav { padding-left: 37.500px; --hole: var(--blue); --word: #fff; }
.nav h2 { width: 1362px; margin-bottom: 42px; }
.bar { display: grid; height: 50px; background: var(--blue); color: #fff; line-height: 51px; }
.bar > .brand { width: 101px; height: 26px; margin: 13px 0 0 18.500px; }
.b1 { width: 1366px; grid-template-columns: 155.500px 88px 115px 134px 102px 578px 71px 50px 1fr; margin-bottom: 15px; }
.b2 { width: 1023.500px; grid-template-columns: 155.500px 88px 115px 134px 102px 199px 39px 71.500px 50px 1fr; margin-bottom: 19px; }
.b3 { width: 1366px; grid-template-columns: 155.500px 88px 95px 134px 102px 558px 111px 50px 1fr; margin-bottom: 20px; }
.b4 { width: 1023.500px; grid-template-columns: 155.500px 88px 95px 134px 102px 218px 111px 50px 1fr; margin-bottom: 20px; }
.bar .on { padding-left: 18px; background: #2f9dba; }
.bar .in { padding-left: 20px; }
.bar .low { padding-top: 2px; }
.bar .strong { font-weight: 500; }
.user { padding-top: 11px; font-size: 12px; line-height: 13px; }
.b3 .user, .b4 .user { font-size: 14px; padding-top: 12px; }
.down { width: 12px; height: 9px; margin-top: 23px; }
.bar .bell { width: 21px; height: 23px; margin-top: 13px; }
.chat { position: relative; display: flex; justify-content: center; width: 40px; height: 40px; margin-top: 4px; padding-top: 11px; border-radius: 50%; background: #323232; }
.chat svg { width: 19px; height: 18px; }
.chat i { position: absolute; left: 0; top: 11px; width: 40px; color: #222; font: 700 11px/14px Roboto, sans-serif; text-align: center; }
.drawers { display: flex; gap: 9px; height: 400px; align-items: start; }
.drawers.second { gap: 19px; }
.drawer { display: grid; width: 768px; border: 1px solid var(--line); border-top: 0; color: var(--blue); font-size: 17px; line-height: 22px; text-align: center; }
.drawer.narrow { width: 480px; }
.six { grid-template-rows: 52px 52px 46.500px 52px 46.500px 50.500px 52.500px; }
.two { grid-template-rows: 52px 51.500px 55px; }
.drawer a { padding-top: 17px; }
.drawer a + a { border-top: 1px solid var(--line); }
.six a:nth-of-type(even) { padding-top: 13.500px; }
.two a { padding-top: 15px; }
.two a + a { padding-top: 13px; }
.icons { display: grid; margin: 0 -1px; background: var(--blue); color: #fff; font-size: 12px; line-height: 14px; }
.icons > span:not(.chat) { display: flex; flex-direction: column; align-items: center; gap: 3px; min-width: 0; padding-top: 12px; }
.icons > span:not(.chat) svg { width: 23px; height: 18px; }
.i1 { grid-template-columns: 139px 80px 203px 129px 70px 76px 1fr; }
.i2 { grid-template-columns: 73px 72px 110.400px 60.200px 81.800px 31px 1fr; }
.i3 { grid-template-columns: 120px 80px 222px 82px 144px 50px 1fr; }
.i4 { grid-template-columns: 58px 70px 116px 51.600px 86.800px 49px 1fr; }
.icons .mark { width: 22px; height: 26px; margin: 13px 0 0 19px; }
.icons .bell { width: 20px; height: 23px; margin: 14px 16px 0 0; justify-self: end; }
.icons .chat { margin-top: 5px; }
```
